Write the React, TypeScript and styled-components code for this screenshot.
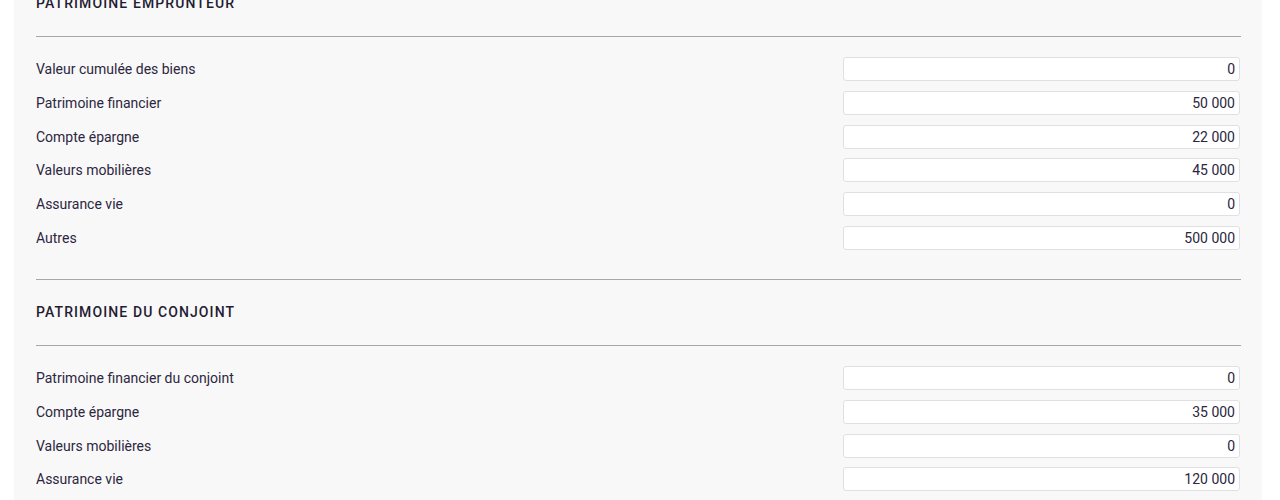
import { createGlobalStyle } from "styled-components";
import styled from "styled-components";

const GlobalStyle = createGlobalStyle`
  html, body {
    margin: 0;
    padding: 0;
    background: #ffffff;
    font-family: Roboto, "Liberation Sans", Arial, sans-serif;
    overflow: hidden;
  }
`;

type Field = { label: string; value: string };

const sections: { title: string; fields: Field[] }[] = [
  {
    title: "Patrimoine emprunteur",
    fields: [
      { label: "Valeur cumulée des biens", value: "0" },
      { label: "Patrimoine financier", value: "50 000" },
      { label: "Compte épargne", value: "22 000" },
      { label: "Valeurs mobilières", value: "45 000" },
      { label: "Assurance vie", value: "0" },
      { label: "Autres", value: "500 000" },
    ],
  },
  {
    title: "Patrimoine du conjoint",
    fields: [
      { label: "Patrimoine financier du conjoint", value: "0" },
      { label: "Compte épargne", value: "35 000" },
      { label: "Valeurs mobilières", value: "0" },
      { label: "Assurance vie", value: "120 000" },
    ],
  },
];

const App = () => {
  return (
    <PageContainer>
      <GlobalStyle />
      <Panel>
        {sections.map((section) => (
          <Section key={section.title}>
            <SectionTitle>{section.title}</SectionTitle>
            <Divider />
            <Rows>
              {section.fields.map((field) => (
                <Row key={field.label}>
                  <Label>{field.label}</Label>
                  <Input type="text" value={field.value} readOnly />
                </Row>
              ))}
            </Rows>
            <Divider />
          </Section>
        ))}
      </Panel>
    </PageContainer>
  );
};

const PageContainer = styled.div`
  width: 100%;
  height: 500px;
  overflow: hidden;
  background: #ffffff;
`;

const Panel = styled.div`
  margin: -7px 18px 0 14px;
  padding: 0 21px 0 22px;
  background: #f8f8f8;
  min-height: 560px;
`;

const Section = styled.section`
  display: flex;
  flex-direction: column;
`;

const SectionTitle = styled.h3`
  margin: 0 0 23px;
  padding: 0;
  height: 20px;
  line-height: 21px;
  font-size: 14px;
  font-weight: 500;
  letter-spacing: 1.1px;
  text-transform: uppercase;
  color: #241c33;
`;

const Divider = styled.hr`
  width: 100%;
  margin: 0;
  border: none;
  border-top: 1px solid #a9a5ae;
  height: 0;
`;

const Rows = styled.div`
  display: flex;
  flex-direction: column;
  gap: 9.8px;
  padding: 20px 0 29px;

  & + hr {
    margin-bottom: 22px;
  }
`;

const Row = styled.div`
  display: grid;
  grid-template-columns: 1fr 397px;
  align-items: center;
  padding-right: 1px;
`;

const Label = styled.span`
  font-size: 14px;
  color: #2d2640;
`;

const Input = styled.input`
  box-sizing: border-box;
  width: 100%;
  height: 24px;
  padding: 0 4px;
  border: 1px solid #e0dfe3;
  border-radius: 3px;
  background: #ffffff;
  font-family: Roboto, "Liberation Sans", Arial, sans-serif;
  font-size: 14px;
  color: #2b2540;
  text-align: right;
  outline: none;
`;

export default App;
